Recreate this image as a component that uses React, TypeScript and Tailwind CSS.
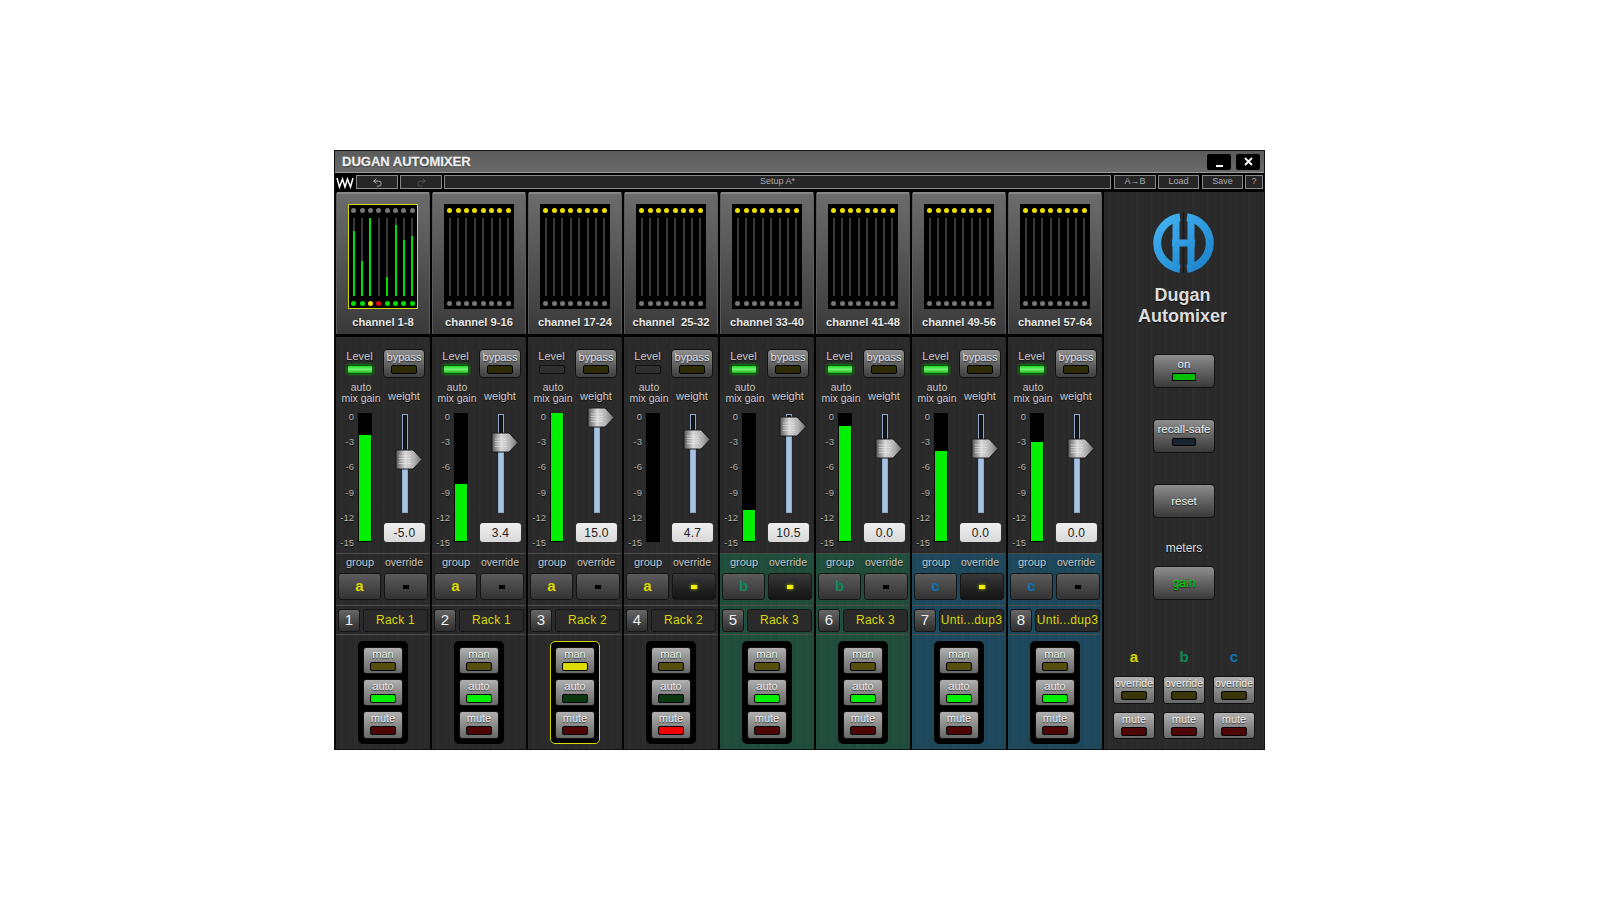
import React from "react";
import { Undo2, Redo2 } from "lucide-react";

type Ch = {
  title: string; num: number; rack: string; level: boolean; gain: number; thumb: number; weight: string;
  group: "a" | "b" | "c"; over: boolean; man: boolean; auto: boolean; mute: boolean; sel: boolean; active?: boolean;
};

const channels: Ch[] = [
  { title: "channel 1-8", num: 1, rack: "Rack 1", level: true, gain: 106, thumb: 36, weight: "-5.0", group: "a", over: false, man: false, auto: true, mute: false, sel: false, active: true },
  { title: "channel 9-16", num: 2, rack: "Rack 1", level: true, gain: 57, thumb: 19, weight: "3.4", group: "a", over: false, man: false, auto: true, mute: false, sel: false },
  { title: "channel 17-24", num: 3, rack: "Rack 2", level: false, gain: 129, thumb: -6, weight: "15.0", group: "a", over: false, man: true, auto: false, mute: false, sel: true },
  { title: "channel  25-32", num: 4, rack: "Rack 2", level: false, gain: 0, thumb: 16, weight: "4.7", group: "a", over: true, man: false, auto: false, mute: true, sel: false },
  { title: "channel 33-40", num: 5, rack: "Rack 3", level: true, gain: 31, thumb: 3, weight: "10.5", group: "b", over: true, man: false, auto: true, mute: false, sel: false },
  { title: "channel 41-48", num: 6, rack: "Rack 3", level: true, gain: 115, thumb: 25, weight: "0.0", group: "b", over: false, man: false, auto: true, mute: false, sel: false },
  { title: "channel 49-56", num: 7, rack: "Unti...dup3", level: true, gain: 90, thumb: 25, weight: "0.0", group: "c", over: true, man: false, auto: true, mute: false, sel: false },
  { title: "channel 57-64", num: 8, rack: "Unti...dup3", level: true, gain: 99, thumb: 25, weight: "0.0", group: "c", over: false, man: false, auto: true, mute: false, sel: false },
];

const wood = "bg-[repeating-linear-gradient(90deg,#2b2b2b_0px,#282828_3px,#2d2d2d_5px,#292929_9px,#2b2b2b_14px)]";
const woodGreen = "bg-[repeating-linear-gradient(90deg,#214e3d_0px,#1f4a39_3px,#22503f_5px,#204c3b_9px)]";
const woodBlue = "bg-[repeating-linear-gradient(90deg,#1f495d_0px,#1d4558_3px,#204b5f_5px,#1e475a_9px)]";
const shadow = "[text-shadow:0_1px_1px_rgba(0,0,0,0.7)]";
const groupColor = { a: "text-[#d8d800]", b: "text-[#0f8a58]", c: "text-[#0b72b4]" };

const activeFills = [65, 35, 78, 0, 19, 71, 56, 60];
const bottomDots = ["bg-[#00e000]", "bg-[#00e000]", "bg-[#f0e000]", "bg-[#f00000]", "bg-[#00e000]", "bg-[#00e000]", "bg-[#00e000]", "bg-[#00e000]"];
const cols = [0, 1, 2, 3, 4, 5, 6, 7];

function Overview({ active }: { active?: boolean }) {
  return (
    <div className={`w-[70px] h-[105px] bg-black flex justify-center gap-[3.4px] ${active ? "pt-[3px] border border-[#d8d800]" : "pt-[4px]"}`}>
      {cols.map((i) => (
        <div key={i} className="flex flex-col items-center w-[5px]">
          <div className={`w-[5px] h-[5px] rounded-full ${active ? "bg-[#777]" : "bg-[#f0e000]"}`} />
          <div className="mt-[5px] h-[78px] w-[2px] bg-[#3a3a3a] flex flex-col justify-end">
            {active && <div className="w-[2px] bg-[#00dd00]" style={{ height: activeFills[i] }} />}
          </div>
          <div className={`mt-[5px] w-[5px] h-[5px] rounded-full ${active ? bottomDots[i] : "bg-[#777]"}`} />
        </div>
      ))}
    </div>
  );
}

function Led({ color, cls = "" }: { color: string; cls?: string }) {
  return <div className={`w-[26px] h-[9px] rounded-[2px] border border-black ${color} ${cls}`} />;
}

const ledOffY = "bg-[#544e10]";
const ledOffYDark = "bg-[#3a3608]";
const ledOnY = "bg-[#dcdc00]";
const ledOffG = "bg-[#0a380f]";
const ledOnG = "bg-[#00f000]";
const ledOffR = "bg-[#4e0505]";
const ledOnR = "bg-[#f00000]";

function LightBtn({ label, led, cls, text = "text-[11px]" }: { label: string; led: string; cls: string; text?: string }) {
  return (
    <div className={`${cls} rounded-[3px] border border-[#111] bg-gradient-to-b from-[#b0b0b0] to-[#686868] flex flex-col items-center`}>
      <span className={`${text} leading-[13px] text-[#f0f0f0] ${shadow}`}>{label}</span>
      <Led color={led} cls="mt-[1px]" />
    </div>
  );
}

function Fader({ top }: { top: number }) {
  return (
    <div className="relative h-[109px] w-[41px]">
      <div className="absolute left-[18px] top-[1px] w-[6px] h-[99px] border border-[#8fa8cc] bg-[#101418] flex flex-col justify-end">
        <div className="w-full bg-[#a9c3e6]" style={{ height: 99 - top - 10 }} />
      </div>
      <svg className="absolute left-[11px]" style={{ top }} width="28" height="21" viewBox="0 0 28 21">
        <defs>
          <linearGradient id="thumbBody" x1="0" x2="1" y1="0" y2="0">
            <stop offset="0" stopColor="#5a5a5a" />
            <stop offset="0.35" stopColor="#d8d8d8" />
            <stop offset="0.7" stopColor="#b0b0b0" />
            <stop offset="1" stopColor="#6e6e6e" />
          </linearGradient>
        </defs>
        <path d="M1 1H18L27 10.5L18 20H1Z" fill="url(#thumbBody)" stroke="#1a1a1a" strokeWidth="1" />
        <path d="M4 7H16M4 9.5H16M4 12H16M4 14.5H16" stroke="#eeeeee" strokeWidth="0.7" opacity="0.8" />
      </svg>
    </div>
  );
}

function Strip({ c }: { c: Ch }) {
  const tint = c.group === "b" ? woodGreen : c.group === "c" ? woodBlue : wood;
  return (
    <div className="w-[94px] mr-[2px] flex flex-col">
      <div className="h-[142px] rounded-t-[2px] border-t-2 border-x border-x-[#5a5a5a] border-t-[#888] bg-gradient-to-b from-[#6c6c6c] to-[#3a3a3a] flex flex-col items-center pt-[10px]">
        <Overview active={c.active} />
        <span className={`mt-[6px] text-[11.2px] leading-[14px] font-bold text-[#e8e8e8] whitespace-pre ${shadow}`}>{c.title}</span>
      </div>
      <div className={`mt-[3px] h-[216px] ${wood} flex flex-col`}>
        <div className="flex pt-[12px] h-[44px]">
          <div className="w-[47px] flex flex-col items-center">
            <span className={`pt-[1px] text-[11px] leading-[13px] text-[#ccc] ${shadow}`}>Level</span>
            <div className={`mt-[2px] w-[26px] h-[9px] rounded-[2px] border ${c.level ? "border-[#0a5a0a] bg-gradient-to-b from-[#18d818] via-[#70f070] to-[#10b010] shadow-[0_0_3px_#00c000]" : "border-[#111] bg-[#2f2f2f]"}`} />
          </div>
          <div className="w-[42px] h-[29px] rounded-[4px] border border-[#111] bg-gradient-to-b from-[#909090] to-[#3e3e3e] flex flex-col items-center">
            <span className={`pt-[1px] text-[11px] leading-[13px] text-[#e4e4e4] ${shadow}`}>bypass</span>
            <Led color="bg-[#2d2a05]" cls="mt-[1px]" />
          </div>
        </div>
        <div className="flex h-[32px]">
          <div className={`w-[47px] pt-[1px] pl-[3px] text-center text-[10.5px] leading-[11px] text-[#ccc] whitespace-pre ${shadow}`}>{"auto\nmix gain"}</div>
          <div className={`w-[42px] pt-[10px] text-center text-[11px] leading-[11px] text-[#ccc] ${shadow}`}>weight</div>
        </div>
        <div className="flex">
          <div className={`-mt-[1px] w-[18px] h-[136px] flex flex-col justify-between items-end text-[9.5px] leading-[10px] text-[#b4b4b4] ${shadow}`}>
            <span>0</span><span>-3</span><span>-6</span><span>-9</span><span>-12</span><span>-15</span>
          </div>
          <div className="ml-[4px] w-[14px] h-[129px] bg-black flex flex-col justify-end items-center border-b border-black">
            <div className="w-[12px] bg-[#00f000]" style={{ height: c.gain }} />
          </div>
          <div className="ml-[12px] flex flex-col">
            <Fader top={c.thumb} />
            <div className="mt-[1px] w-[41px] h-[19px] rounded-[3px] bg-gradient-to-b from-[#f0f0f0] to-[#d8d8d8] flex items-center justify-center text-[12px] tracking-[0.3px] text-[#222]">{c.weight}</div>
          </div>
        </div>
      </div>
      <div className={`h-[52px] ${tint} border-t border-[#4c4c4c] flex flex-col`}>
        <div className={`flex h-[19px] pb-[2px] items-center text-[#c8c8c8] ${shadow}`}>
          <span className="w-[48px] text-center text-[11px]">group</span>
          <span className="w-[40px] text-center text-[10.5px] whitespace-nowrap">override</span>
        </div>
        <div className="flex pl-[2px] gap-[3px]">
          <div className="w-[43px] h-[27px] rounded-[3px] border border-[#151515] bg-gradient-to-b from-[#5c5c5c] to-[#333] flex items-center justify-center">
            <span className={`text-[15px] font-bold ${groupColor[c.group]}`}>{c.group}</span>
          </div>
          <div className={`w-[44px] h-[27px] rounded-[3px] border border-[#151515] bg-gradient-to-b flex items-center justify-center ${c.over ? "from-[#383838] to-[#141414]" : "from-[#5c5c5c] to-[#333]"}`}>
            <div className={`w-[6px] h-[4px] ${c.over ? "bg-[#f0f000] shadow-[0_0_3px_#d8d800]" : "bg-black"}`} />
          </div>
        </div>
      </div>
      <div className={`h-[29px] ${tint} border-t border-[#4c4c4c] flex pl-[2px] gap-[3px] pt-[3px]`}>
        <div className="w-[22px] h-[23px] pb-[1px] rounded-[3px] border border-[#151515] bg-gradient-to-b from-[#666] to-[#2e2e2e] flex items-center justify-center text-[15px] text-[#eee]">{c.num}</div>
        <div className="w-[65px] h-[23px] pb-[1px] rounded-[3px] border border-[#151515] bg-[#2a2a2a] flex items-center justify-center text-[12px] tracking-[0.3px] text-[#d8d800] whitespace-nowrap">{c.rack}</div>
      </div>
      <div className={`h-[115px] ${tint} border-t border-[#4c4c4c] flex justify-center pt-[6px]`}>
        <div className={`w-[50px] h-[103px] rounded-[5px] bg-black flex flex-col items-center gap-[5px] ${c.sel ? "pt-[5px] border border-[#d8d800]" : "pt-[6px]"}`}>
          <LightBtn label="man" led={c.man ? ledOnY : ledOffY} cls="w-[40px] h-[27px]" />
          <LightBtn label="auto" led={c.auto ? ledOnG : ledOffG} cls="w-[40px] h-[27px]" />
          <LightBtn label="mute" led={c.mute ? ledOnR : ledOffR} cls="w-[40px] h-[28px]" />
        </div>
      </div>
    </div>
  );
}

function ToolBtn({ children, cls }: { children?: React.ReactNode; cls: string }) {
  return <div className={`${cls} h-[14px] border border-[#8a8a8a] bg-[#262626] flex items-center justify-center text-[9px] text-[#aaa]`}>{children}</div>;
}

function PanelBtn({ children }: { children: React.ReactNode }) {
  return <div className="w-[62px] h-[34px] rounded-[4px] border border-[#111] bg-gradient-to-b from-[#8e8e8e] to-[#3a3a3a] flex flex-col items-center">{children}</div>;
}

function Logo() {
  return (
    <svg className="mr-[2px]" width="62" height="64" viewBox="0 0 62 64">
      <defs>
        <linearGradient id="logoBlue" gradientUnits="userSpaceOnUse" x1="5" y1="3" x2="58" y2="62">
          <stop offset="0" stopColor="#45b4f4" />
          <stop offset="1" stopColor="#1a80c8" />
        </linearGradient>
      </defs>
      <path d="M28 6.2A26 26 0 0 0 28 57.8" fill="none" stroke="url(#logoBlue)" strokeWidth="8" />
      <path d="M35 6.2A26 26 0 0 1 35 57.8" fill="none" stroke="url(#logoBlue)" strokeWidth="8" />
      <path d="M24 6V58M39 6V58" stroke="url(#logoBlue)" strokeWidth="7" />
      <path d="M20 32H43" stroke="url(#logoBlue)" strokeWidth="7" />
      <path d="M31.5 2V28M31.5 36V62" stroke="#1a1a1a" strokeWidth="1.5" />
    </svg>
  );
}

function Waves() {
  return (
    <svg width="18" height="13" viewBox="0 0 18 13">
      <path d="M1 2L3.5 11L6.5 3L9 11L11.5 3L14.5 11L17 2" fill="none" stroke="#fff" strokeWidth="1.5" />
    </svg>
  );
}

export default function App() {
  return (
    <div className="min-h-[900px] bg-white pl-[334px] pt-[150px] font-['Liberation_Sans',Arial,sans-serif]">
      <div className="w-[931px] h-[600px] border border-[#111] bg-black flex flex-col">
        <div className="h-[22px] bg-gradient-to-b from-[#5a5a5a] to-[#6a6a6a] border-b border-[#999] flex items-center pl-[7px] pr-[4px]">
          <span className={`text-[13px] font-bold text-[#eee] [-webkit-text-stroke:0.3px_#eeeeee] ${shadow}`}>DUGAN AUTOMIXER</span>
          <div className="ml-auto flex gap-[5px]">
            <div className="w-[24px] h-[16px] rounded-[2px] bg-black flex items-end justify-center pb-[3px]"><div className="w-[7px] h-[2px] bg-white" /></div>
            <div className="w-[24px] h-[16px] rounded-[2px] bg-black flex items-center justify-center text-white">
              <svg width="9" height="9" viewBox="0 0 9 9"><path d="M1 1L8 8M8 1L1 8" stroke="#fff" strokeWidth="1.8" /></svg>
            </div>
          </div>
        </div>
        <div className="h-[18px] bg-black flex items-center gap-[2px] pl-[1px]">
          <div className="w-[18px] flex justify-center"><Waves /></div>
          <ToolBtn cls="w-[42px]"><Undo2 size={11} color="#bbb" /></ToolBtn>
          <ToolBtn cls="w-[42px]"><Redo2 size={11} color="#555" /></ToolBtn>
          <ToolBtn cls="w-[667px]">Setup A*</ToolBtn>
          <ToolBtn cls="w-[42px] ml-[1px]">A→B</ToolBtn>
          <ToolBtn cls="w-[41px]">Load</ToolBtn>
          <ToolBtn cls="w-[41px] ml-[1px]">Save</ToolBtn>
          <ToolBtn cls="w-[18px]">?</ToolBtn>
        </div>
        <div className="flex pt-[1px] pl-[1px]">
          {channels.map((c) => <Strip key={c.num} c={c} />)}
          <div className={`w-[160px] h-[557px] ${wood} flex flex-col items-center pt-[19px]`}>
            <Logo />
            <div className={`mt-[10px] mr-[3px] text-center text-[18px] leading-[21px] font-bold text-[#ddd] ${shadow}`}>Dugan<br />Automixer</div>
            <div className="mt-[27px] flex flex-col items-center gap-[31px]">
              <PanelBtn>
                <span className={`pt-[2px] text-[11.5px] leading-[15px] text-[#eee] ${shadow}`}>on</span>
                <div className="w-[24px] h-[8px] mt-[1px] border border-black bg-[#00c000]" />
              </PanelBtn>
              <PanelBtn>
                <span className={`pt-[2px] text-[11.5px] leading-[15px] text-[#eee] ${shadow}`}>recall-safe</span>
                <div className="w-[24px] h-[8px] mt-[1px] rounded-[2px] border border-black bg-[#18252e]" />
              </PanelBtn>
              <PanelBtn>
                <span className={`text-[11.5px] leading-[32px] text-[#eee] ${shadow}`}>reset</span>
              </PanelBtn>
            </div>
            <span className={`mt-[23px] text-[12px] leading-[14px] text-[#ddd] ${shadow}`}>meters</span>
            <div className="mt-[11px]">
              <PanelBtn><span className={`text-[12px] leading-[32px] text-[#00d000] ${shadow}`}>gain</span></PanelBtn>
            </div>
            <div className="mt-[48px] flex gap-[8px]">
              {(["a", "b", "c"] as const).map((g) => (
                <div key={g} className="w-[42px] flex flex-col items-center">
                  <span className={`text-[15px] leading-[18px] font-bold ${groupColor[g]}`}>{g}</span>
                  <div className="mt-[10px] flex flex-col gap-[8px]">
                    <LightBtn label="override" text="text-[10.5px]" led={ledOffYDark} cls="w-[42px] h-[28px]" />
                    <LightBtn label="mute" led={ledOffR} cls="w-[42px] h-[27px]" />
                  </div>
                </div>
              ))}
            </div>
          </div>
        </div>
      </div>
    </div>
  );
}
